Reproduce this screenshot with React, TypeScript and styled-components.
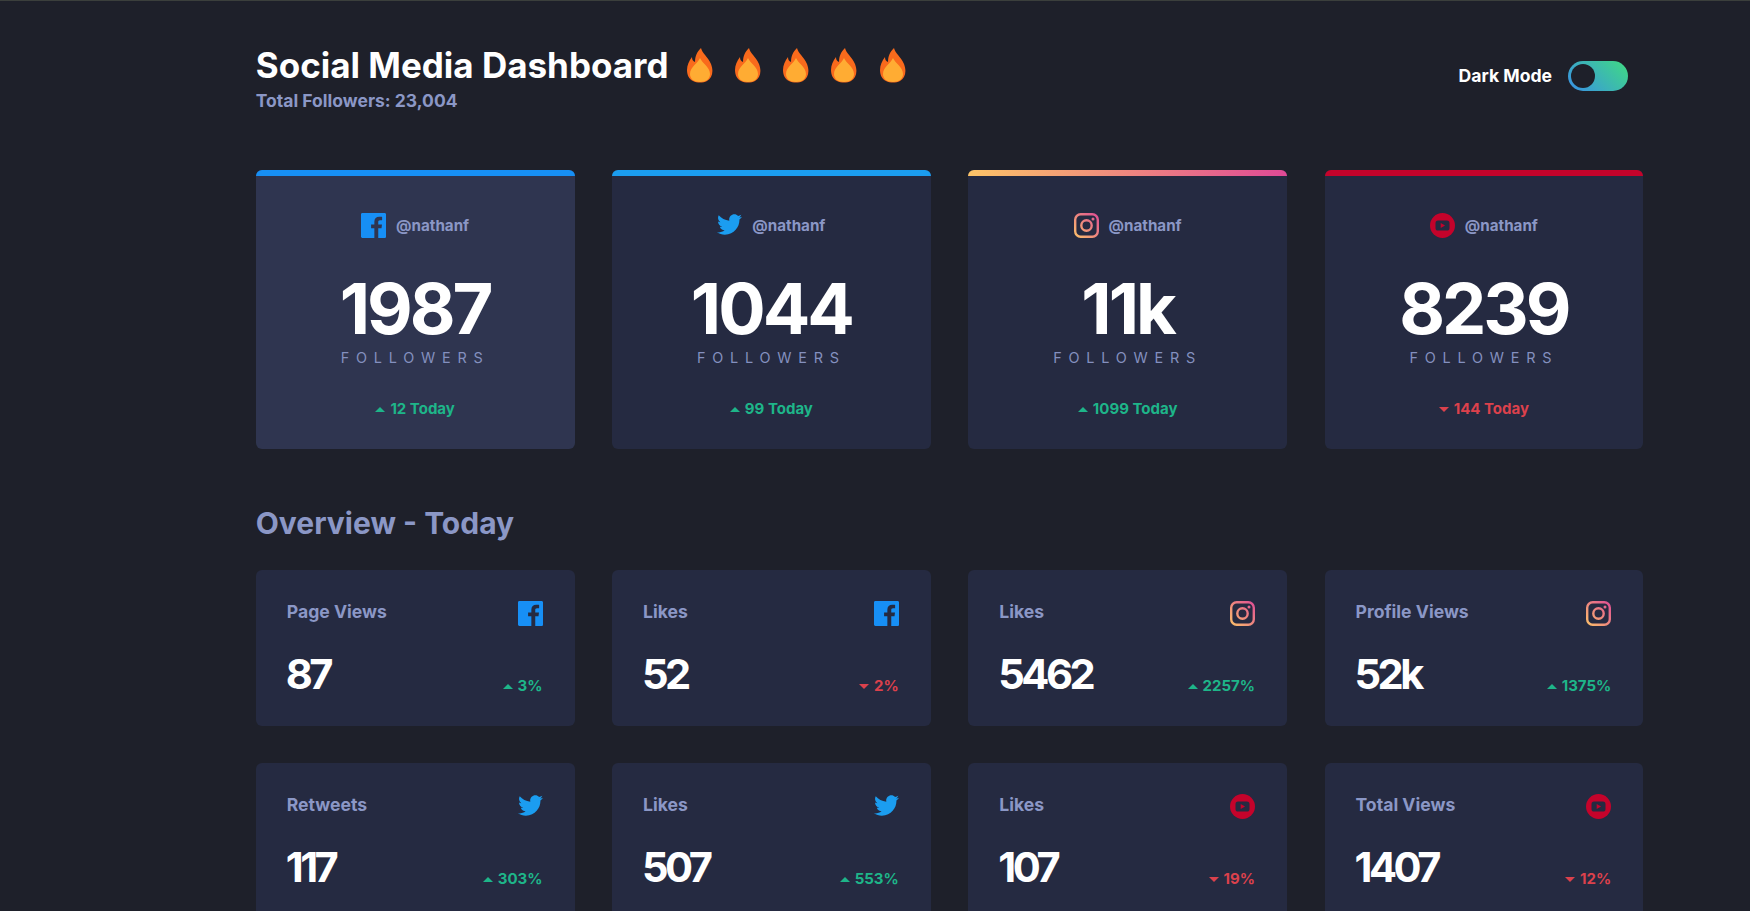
import React from 'react';
import styled, { createGlobalStyle } from 'styled-components';
import { FaTwitter } from 'react-icons/fa';

type Network = 'facebook' | 'twitter' | 'instagram' | 'youtube';

interface FollowerStat {
  network: Network;
  count: string;
  change: string;
  up: boolean;
  active?: boolean;
}

interface OverviewStat {
  network: Network;
  label: string;
  count: string;
  change: string;
  up: boolean;
}

const followerStats: FollowerStat[] = [
  { network: 'facebook', count: '1987', change: '12 Today', up: true, active: true },
  { network: 'twitter', count: '1044', change: '99 Today', up: true },
  { network: 'instagram', count: '11k', change: '1099 Today', up: true },
  { network: 'youtube', count: '8239', change: '144 Today', up: false },
];

const overviewStats: OverviewStat[] = [
  { network: 'facebook', label: 'Page Views', count: '87', change: '3%', up: true },
  { network: 'facebook', label: 'Likes', count: '52', change: '2%', up: false },
  { network: 'instagram', label: 'Likes', count: '5462', change: '2257%', up: true },
  { network: 'instagram', label: 'Profile Views', count: '52k', change: '1375%', up: true },
  { network: 'twitter', label: 'Retweets', count: '117', change: '303%', up: true },
  { network: 'twitter', label: 'Likes', count: '507', change: '553%', up: true },
  { network: 'youtube', label: 'Likes', count: '107', change: '19%', up: false },
  { network: 'youtube', label: 'Total Views', count: '1407', change: '12%', up: false },
];

const accents: Record<Network, string> = {
  facebook: '#178fF5',
  twitter: '#1b9df0',
  instagram: 'linear-gradient(90deg, #fdc468, #df4996)',
  youtube: '#c4032b',
};

// ICONS
const FacebookIcon = () => (
  <svg width='25' height='25' viewBox='0 0 20 20'>
    <path
      fill='#178ff5'
      d='M18.896 0H1.104C.494 0 0 .494 0 1.104v17.792C0 19.506.494 20 1.104 20h9.579v-7.745H8.076V9.237h2.607V7.01c0-2.584 1.578-3.99 3.883-3.99 1.104 0 2.052.082 2.329.119v2.7h-1.598c-1.254 0-1.496.596-1.496 1.47v1.927h2.989l-.39 3.018h-2.6V20h5.097c.61 0 1.104-.494 1.104-1.104V1.104C20 .494 19.506 0 18.896 0z'
    />
  </svg>
);

const InstagramIcon = ({ id }: { id: string }) => (
  <svg width='25' height='25' viewBox='0 0 25 25' fill='none'>
    <defs>
      <linearGradient id={id} x1='0' y1='25' x2='25' y2='0' gradientUnits='userSpaceOnUse'>
        <stop offset='0' stopColor='#fdc468' />
        <stop offset='1' stopColor='#df4996' />
      </linearGradient>
    </defs>
    <rect x='1.2' y='1.2' width='22.6' height='22.6' rx='5.5' stroke={`url(#${id})`} strokeWidth='2.4' />
    <circle cx='12.5' cy='12.5' r='5.2' stroke={`url(#${id})`} strokeWidth='2.4' />
    <circle cx='19' cy='6' r='1.5' fill={`url(#${id})`} />
  </svg>
);

const YoutubeIcon = () => (
  <svg width='25' height='25' viewBox='0 0 25 25'>
    <circle cx='12.5' cy='12.5' r='12.5' fill='#c4032b' />
    <rect x='5.5' y='7.5' width='14' height='10' rx='2.6' fill='#252a41' />
    <path d='M10.7 10v5l4.4-2.5z' fill='#c4032b' />
  </svg>
);

const TwitterIcon = styled(FaTwitter)`
  width: 25px;
  height: 25px;
  color: #1b9df0;
  transform: translateY(-1px);
`;

const NetworkIcon = ({ network, id }: { network: Network; id: string }) => {
  if (network === 'facebook') return <FacebookIcon />;
  if (network === 'twitter') return <TwitterIcon />;
  if (network === 'instagram') return <InstagramIcon id={id} />;
  return <YoutubeIcon />;
};

const Flame = () => (
  <svg width='26' height='35' viewBox='0 0 26 35'>
    <path
      fill='#f96a1c'
      d='M14 0c1 5 7 9 10 16 3 8 1 14-4 17-4 2-10 2-14 0C2 31 0 27 0 22c0-5 2-9 5-13 0 3 1 4 3 5 0-6 2-10 6-14z'
    />
    <path
      fill='#ffac33'
      d='M13 10c2 5 10 9 10 16 0 5-4 8-10 8S3 31 3 26c0-7 8-11 10-16z'
    />
  </svg>
);

const Arrow = ({ up }: { up: boolean }) => <Triangle $up={up} />;

const App: React.FC = () => {
  return (
    <Page>
      <GlobalStyle />
      <Header>
        <div>
          <TitleRow>
            <Title>Social Media Dashboard</Title>
            <Flames>
              {[0, 1, 2, 3, 4].map((n) => (
                <Flame key={n} />
              ))}
            </Flames>
          </TitleRow>
          <Total>Total Followers: 23,004</Total>
        </div>
        <ModeToggle>
          <ModeLabel>Dark Mode</ModeLabel>
          <Track>
            <Knob />
          </Track>
        </ModeToggle>
      </Header>

      <Grid>
        {followerStats.map((stat) => (
          <FollowerCard key={stat.network} $accent={accents[stat.network]} $active={stat.active}>
            <Handle>
              <NetworkIcon network={stat.network} id={`ig-${stat.network}`} />
              <span>@nathanf</span>
            </Handle>
            <BigCount>{stat.count}</BigCount>
            <Caption>Followers</Caption>
            <Change $up={stat.up}>
              <Arrow up={stat.up} />
              {stat.change}
            </Change>
          </FollowerCard>
        ))}
      </Grid>

      <SectionTitle>Overview - Today</SectionTitle>

      <Grid>
        {overviewStats.map((stat, index) => (
          <OverviewCard key={index}>
            <OverviewTop>
              <OverviewLabel>{stat.label}</OverviewLabel>
              <NetworkIcon network={stat.network} id={`ig-o-${index}`} />
            </OverviewTop>
            <OverviewBottom>
              <SmallCount>{stat.count}</SmallCount>
              <Change $up={stat.up}>
                <Arrow up={stat.up} />
                {stat.change}
              </Change>
            </OverviewBottom>
          </OverviewCard>
        ))}
      </Grid>
    </Page>
  );
};

// STYLED COMPONENTS
const GlobalStyle = createGlobalStyle`
  html, body {
    margin: 0;
    background: #1e202a;
    overflow: hidden;
    height: 911px;
  }
  body {
    font-family: Inter, "Liberation Sans", sans-serif;
    border-top: 1px solid #3b3f3c;
    box-sizing: border-box;
  }
`;

const Page = styled.main`
  width: 1387.5px;
  margin-left: 255.75px;
`;

const Header = styled.header`
  display: flex;
  justify-content: space-between;
  align-items: flex-start;
  padding: 41px 15.25px 0 0;
  height: 70px;
  box-sizing: content-box;
  margin-bottom: 58px;
`;

const TitleRow = styled.div`
  display: flex;
  align-items: center;
  height: 46px;
`;

const Title = styled.h1`
  margin: 0;
  font-size: 35px;
  font-weight: 700;
  line-height: 46px;
  color: #ffffff;
`;

const Flames = styled.div`
  display: flex;
  gap: 22.25px;
  margin: 1px 0 0 18px;
`;

const Total = styled.p`
  margin: 2px 0 0;
  font-size: 17.5px;
  font-weight: 700;
  line-height: 22px;
  color: #8b97c6;
`;

const ModeToggle = styled.div`
  display: flex;
  align-items: center;
  gap: 16px;
  margin-top: 19px;
`;

const ModeLabel = styled.span`
  font-size: 17.6px;
  font-weight: 700;
  padding-bottom: 2px;
  color: #ffffff;
`;

const Track = styled.div`
  width: 60px;
  height: 30px;
  border-radius: 15px;
  padding: 3px;
  box-sizing: border-box;
  background: linear-gradient(225deg, #40db82, #388fe7);
`;

const Knob = styled.div`
  width: 24px;
  height: 24px;
  border-radius: 50%;
  background: #1e202a;
`;

const Grid = styled.section`
  display: grid;
  grid-template-columns: repeat(4, 1fr);
  gap: 37px 37.5px;
`;

const FollowerCard = styled.article<{ $accent: string; $active?: boolean }>`
  position: relative;
  height: 279px;
  border-radius: 6px;
  overflow: hidden;
  padding-top: 43px;
  box-sizing: border-box;
  background: ${(props) => (props.$active ? '#2f3550' : '#252a41')};
  text-align: center;

  &::before {
    content: '';
    position: absolute;
    inset: 0 0 auto 0;
    height: 6px;
    background: ${(props) => props.$accent};
  }
`;

const Handle = styled.div`
  display: flex;
  justify-content: center;
  align-items: center;
  gap: 10px;
  height: 25px;
  font-size: 15.2px;
  font-weight: 700;
  color: #8b97c6;
`;

const BigCount = styled.div`
  margin-top: 35px;
  font-size: 70.4px;
  font-weight: 700;
  line-height: 72px;
  letter-spacing: -3px;
  color: #ffffff;
`;

const Caption = styled.div`
  margin-top: 3px;
  font-size: 14.4px;
  line-height: 20px;
  letter-spacing: 6.8px;
  text-transform: uppercase;
  color: #8490bf;
`;

const Change = styled.div<{ $up: boolean }>`
  display: flex;
  justify-content: center;
  align-items: center;
  gap: 5px;
  font-size: 15px;
  font-weight: 700;
  line-height: 20px;
  margin-bottom: 3px;
  color: ${(props) => (props.$up ? '#1eb589' : '#dc414c')};

  ${FollowerCard} & {
    margin-top: 31px;
  }
`;

const Triangle = styled.span<{ $up: boolean }>`
  width: 0;
  height: 0;
  border-left: 5px solid transparent;
  border-right: 5px solid transparent;
  ${(props) =>
    props.$up ? 'border-bottom: 5px solid currentColor;' : 'border-top: 5px solid currentColor;'}
`;

const SectionTitle = styled.h2`
  margin: 55px 0 28px;
  font-size: 30px;
  font-weight: 700;
  line-height: 38px;
  color: #8b97c6;
`;

const OverviewCard = styled.article`
  height: 156px;
  border-radius: 6px;
  padding: 31px 32px 0 31px;
  box-sizing: border-box;
  background: #252a41;
`;

const OverviewTop = styled.div`
  display: flex;
  justify-content: space-between;
  align-items: center;
  height: 25px;
`;

const OverviewLabel = styled.span`
  font-size: 17.6px;
  font-weight: 700;
  padding-bottom: 4px;
  color: #8b97c6;
`;

const OverviewBottom = styled.div`
  display: flex;
  justify-content: space-between;
  align-items: flex-end;
  margin-top: 23px;
`;

const SmallCount = styled.div`
  font-size: 41.6px;
  font-weight: 700;
  line-height: 50px;
  letter-spacing: -3.5px;
  margin-left: -1px;
  color: #ffffff;
`;

export default App;
